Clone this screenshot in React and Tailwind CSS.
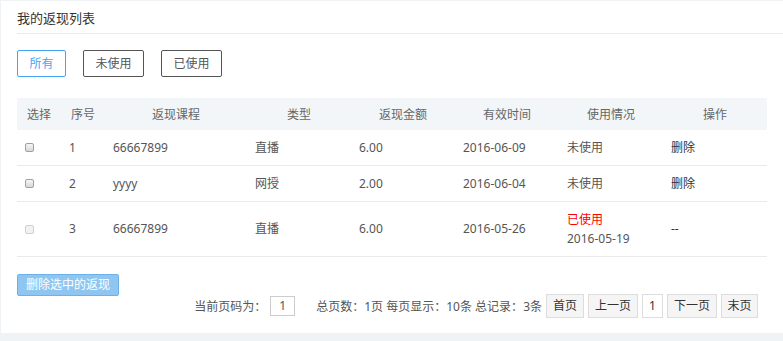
import React from "react";

const font = { fontFamily: '"Noto Sans", "Noto Sans CJK SC", sans-serif' };
const cjk = { fontFamily: '"Noto Sans CJK SC", sans-serif' };

function C() {
  return <span style={cjk}>：</span>;
}

function Check({ disabled }) {
  return (
    <span
      className={
        "block w-[9px] h-[9px] rounded-[2px] border " +
        (disabled
          ? "border-[#d0d0d0] bg-[#f2f2f2]"
          : "border-[#a0a0a0] bg-gradient-to-b from-[#f6f6f6] to-[#d8d8d8]")
      }
    />
  );
}

const cols = ["w-[44px]", "w-[44px]", "w-[142px]", "w-[104px]", "w-[104px]", "w-[104px]", "w-[104px]", "w-[104px]"];
const heads = ["选择", "序号", "返现课程", "类型", "返现金额", "有效时间", "使用情况", "操作"];

const rows = [
  { n: "1", c: "66667899", t: "直播", a: "6.00", d: "2016-06-09", s: "未使用", op: "删除" },
  { n: "2", c: "yyyy", t: "网授", a: "2.00", d: "2016-06-04", s: "未使用", op: "删除" },
  { n: "3", c: "66667899", t: "直播", a: "6.00", d: "2016-05-26", used: "2016-05-19", op: "--", tall: true, disabled: true },
];

export default function App() {
  return (
    <div className="w-[783px] h-[341px] bg-[#eff3f6] pt-px pl-px text-[12px] text-[#555] leading-none" style={font}>
      <div className="bg-white h-[332px]">
        <div className="ml-[16px] h-[33px] border-b border-[#e8ebee] flex items-center text-[13px] text-[#333] pt-[2px]">
          我的返现列表
        </div>
        <div className="flex ml-[16px] mt-[16px] gap-[17px]">
          <div className="w-[49px] h-[27px] border border-[#45a5f5] rounded-[2px] text-[#45a5f5] flex items-center justify-center">所有</div>
          <div className="w-[61px] h-[27px] border border-[#555] rounded-[2px] flex items-center justify-center">未使用</div>
          <div className="w-[61px] h-[27px] border border-[#555] rounded-[2px] flex items-center justify-center">已使用</div>
        </div>
        <div className="ml-[16px] mt-[21px] w-[750px]">
          <div className="flex h-[32px] bg-[#f3f6f8] text-[#666] pt-px">
            {heads.map((h, i) => (
              <div key={i} className={cols[i] + " flex items-center justify-center"}>{h}</div>
            ))}
          </div>
          {rows.map((r, i) => (
            <div key={i} className={"flex border-b border-[#e8ebee] " + (r.tall ? "h-[55px]" : "h-[36px]")}>
              <div className={cols[0] + " flex items-center pl-[8px]"}><Check disabled={r.disabled} /></div>
              <div className={cols[1] + " flex items-center pl-[8px]"}>{r.n}</div>
              <div className={cols[2] + " flex items-center pl-[8px]"}>{r.c}</div>
              <div className={cols[3] + " flex items-center pl-[8px]"}>{r.t}</div>
              <div className={cols[4] + " flex items-center pl-[8px]"}>{r.a}</div>
              <div className={cols[5] + " flex items-center pl-[8px]"}>{r.d}</div>
              <div className={cols[6] + " flex flex-col justify-center pl-[8px]"}>
                {r.used ? (
                  <>
                    <span className="text-[#ff0000]">已使用</span>
                    <span className="mt-[7px]">{r.used}</span>
                  </>
                ) : (
                  <span>{r.s}</span>
                )}
              </div>
              <div className={cols[7] + " flex items-center pl-[8px] text-[#333]"}>{r.op}</div>
            </div>
          ))}
        </div>
        <div className="ml-[16px] mt-[17px] w-[102px] h-[22px] bg-[#8fc6f1] border border-[#6db1ea] rounded-[2px] text-white flex items-center justify-center">
          删除选中的返现
        </div>
        <div className="flex items-center justify-end mr-[25px] -mt-[2px] h-[24px]">
          <span>当前页码为<C /></span>
          <span className="ml-[4px] w-[25px] h-[20px] border border-[#ccc] flex items-center justify-center">1</span>
          <span className="ml-[21px]">总页数<C />1页 每页显示<C />10条 总记录<C />3条</span>
          <span className="ml-[4px] w-[38px] h-[24px] border border-[#ddd] bg-[#f5f5f5] flex items-center justify-center text-[#333]">首页</span>
          <span className="ml-[4px] w-[50px] h-[24px] border border-[#ddd] bg-[#f5f5f5] flex items-center justify-center text-[#333]">上一页</span>
          <span className="ml-[4px] w-[21px] h-[24px] border border-[#ddd] bg-white flex items-center justify-center text-[#333]">1</span>
          <span className="ml-[4px] w-[50px] h-[24px] border border-[#ddd] bg-[#f5f5f5] flex items-center justify-center text-[#333]">下一页</span>
          <span className="ml-[4px] w-[37px] h-[24px] border border-[#ddd] bg-[#f5f5f5] flex items-center justify-center text-[#333]">末页</span>
        </div>
      </div>
    </div>
  );
}
